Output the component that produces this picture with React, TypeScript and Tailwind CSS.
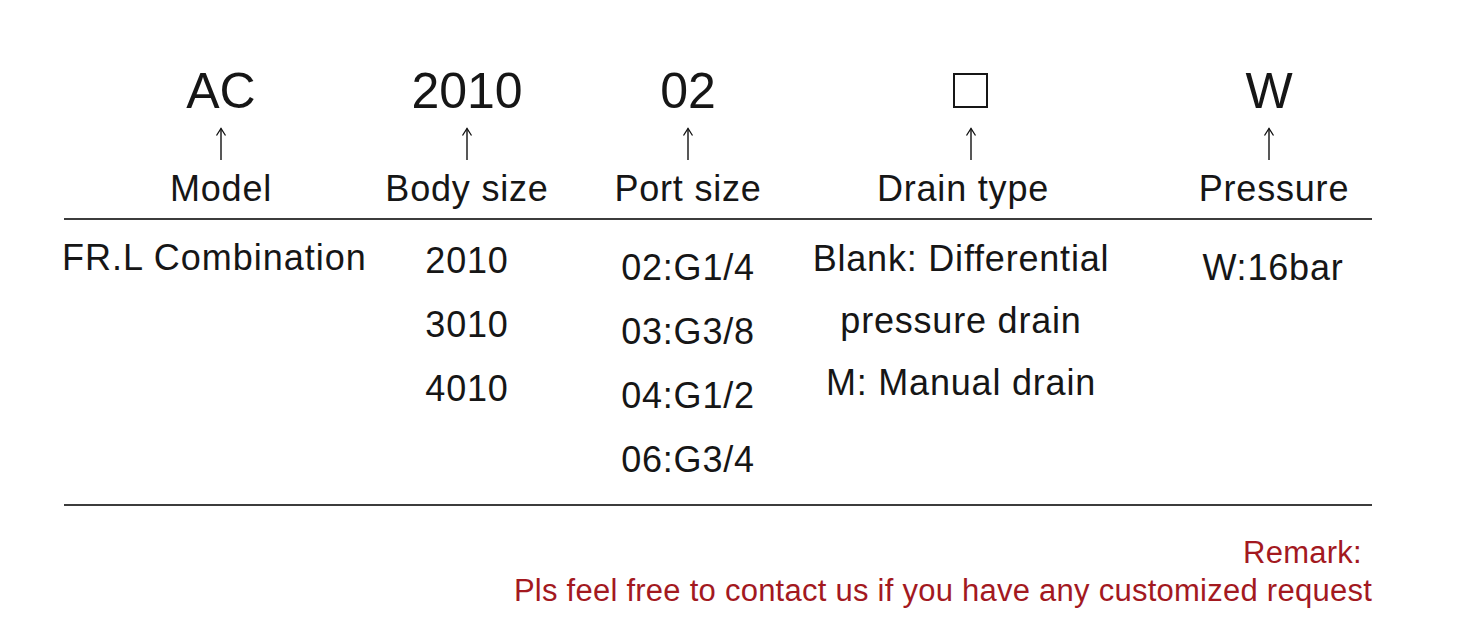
import React from "react";

const font = "font-['Liberation_Sans',Arial,Helvetica,sans-serif]";

function UpArrow() {
    return (
        <svg width="12" height="34" viewBox="0 0 12 34" className="block">
            <path d="M6 1.5 V33" stroke="#111" strokeWidth="1.4" fill="none" />
            <path d="M1.5 8.5 L6 1.5 L10.5 8.5" stroke="#111" strokeWidth="1.3" fill="none" />
        </svg>
    );
}

type Head = { code: string; label: string };

const heads: Head[] = [
    { code: "AC", label: "Model" },
    { code: "2010", label: "Body size" },
    { code: "02", label: "Port size" },
    { code: "\u25A1", label: "Drain type" },
    { code: "W", label: "Pressure" },
];

// per column nudges so the header stack lines up like the source sheet
const cellPad = ["", "", "", "pl-[5px]", "pl-[50px]"];
const labelNudge = ["", "", "", "-ml-[15px]", "ml-[10px]"];

export default function App() {
    return (
        <div className={`w-[1464px] h-[636px] bg-white text-[#161616] ${font} overflow-hidden`}>
            <div className="w-[1372px] pl-[64px]">
                {/* header row */}
                <div className="grid grid-cols-[314px_178px_264px_296px_1fr] pt-[66px] h-[220px] border-b-2 border-[#3c3c3c]">
                    {heads.map((h, i) => (
                        <div key={h.label} className={"flex flex-col items-center " + cellPad[i]}>
                            <div className="text-[50px] leading-[50px] h-[50px]">
                                {i === 3 ? (
                                    <span className="inline-block w-[35px] h-[35px] border-2 border-[#161616] mt-[6px]" />
                                ) : (
                                    h.code
                                )}
                            </div>
                            <div className="mt-[11px]">
                                <UpArrow />
                            </div>
                            <div className={"text-[36px] leading-[36px] tracking-[0.8px] mt-[10px] " + labelNudge[i]}>
                                {h.label}
                            </div>
                        </div>
                    ))}
                </div>

                {/* values */}
                <div className="grid grid-cols-[314px_178px_264px_296px_1fr] h-[286px] border-b-2 border-[#3c3c3c] text-[36px] tracking-[0.8px]">
                    <div className="pt-[6px] leading-[64px] -ml-[2px] tracking-[1px]">FR.L Combination</div>
                    <div className="pt-[9px] leading-[64px] flex flex-col items-center">
                        <span>2010</span>
                        <span>3010</span>
                        <span>4010</span>
                    </div>
                    <div className="pt-[16px] leading-[64px] flex flex-col items-center">
                        <span>02:G1/4</span>
                        <span>03:G3/8</span>
                        <span>04:G1/2</span>
                        <span>06:G3/4</span>
                    </div>
                    <div className="pt-[8px] leading-[62px] flex flex-col items-center -ml-[14px]">
                        <span>Blank: Differential</span>
                        <span>pressure drain</span>
                        <span>M: Manual drain</span>
                    </div>
                    <div className="pt-[16px] leading-[64px] flex flex-col items-center pl-[58px]">
                        <span>W:16bar</span>
                    </div>
                </div>

                {/* remark */}
                <div className="text-right text-[#a3191f] text-[31px] leading-[38px] pt-[28px] tracking-[0.25px]">
                    <div className="pr-[10px]">Remark:</div>
                    <div>Pls feel free to contact us if you have any customized request</div>
                </div>
            </div>
        </div>
    );
}
